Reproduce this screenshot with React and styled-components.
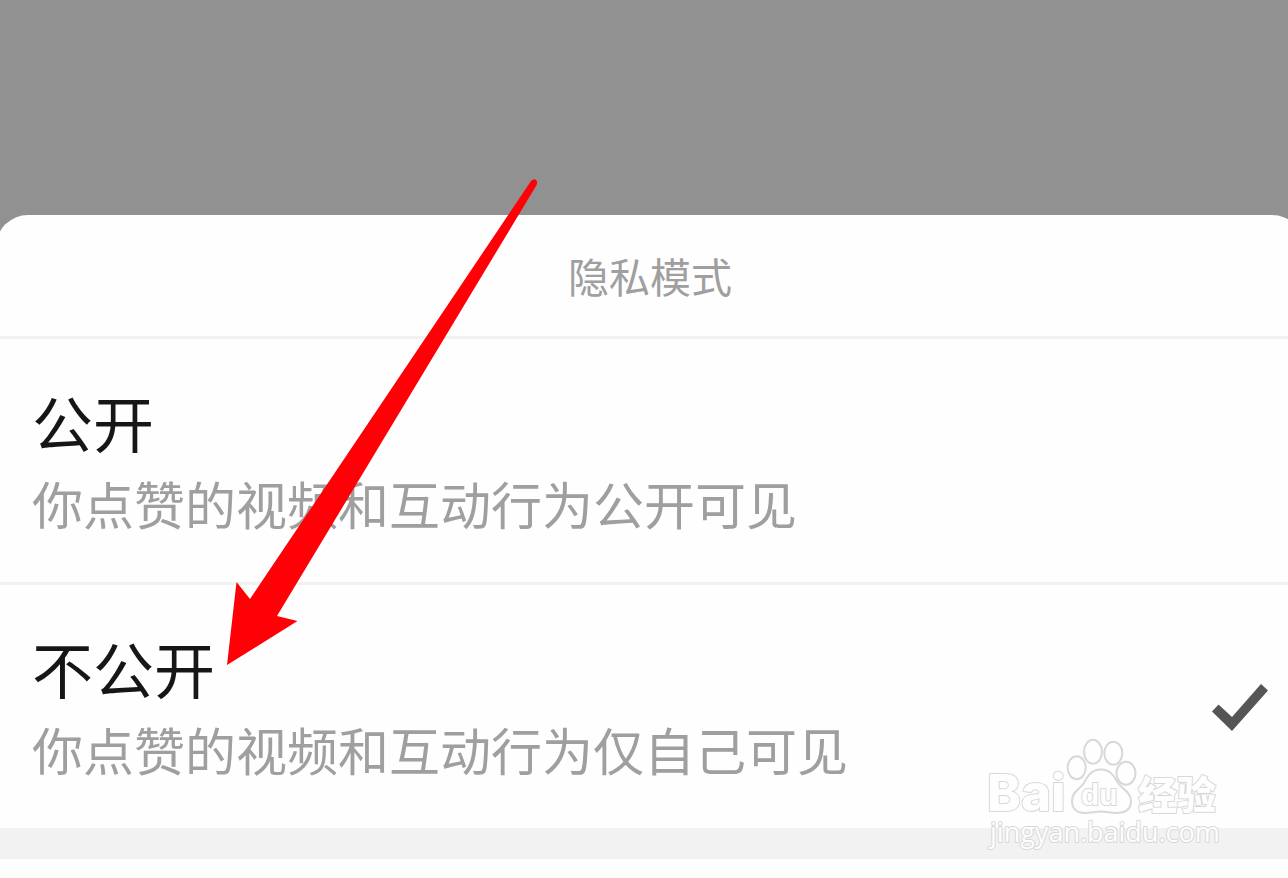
import React, { useState } from "react";
import styled, { createGlobalStyle } from "styled-components";

const GlobalStyle = createGlobalStyle`
  * { box-sizing: border-box; }
  body {
    margin: 0;
    background: #fefefe;
    font-family: "Noto Sans CJK SC", "Noto Sans", sans-serif;
  }
`;

const Page = styled.main`
  position: relative;
  min-height: 100vh;
  overflow: hidden;
  background: #fefefe;
`;

const Backdrop = styled.div`
  padding-top: 215px;
  background: #919191;
`;

const Sheet = styled.section`
  position: relative;
  margin: 0 -16px 0 -4px;
  border-radius: 32px 32px 0 0;
  background: #fefefe;
`;

const SheetTitle = styled.h1`
  margin: 0;
  padding: 30px 36px 31px;
  font-size: 41px;
  line-height: 60px;
  font-weight: 400;
  text-align: center;
  color: #9f9f9f;
`;

const Options = styled.div`
  border-bottom: 31px solid #f2f2f2;
`;

const Option = styled.label`
  display: flex;
  align-items: center;
  justify-content: space-between;
  padding: 41px 36px 40px;
  border-top: 3px solid #f1f1f1;
  cursor: pointer;
`;

const OptionText = styled.span`
  display: flex;
  flex-direction: column;
`;

const OptionName = styled.span`
  font-size: 61px;
  line-height: 84px;
  color: #161616;
`;

const OptionNote = styled.span`
  font-size: 51px;
  line-height: 78px;
  color: #9f9f9f;
`;

const Radio = styled.input`
  appearance: none;
  position: absolute;
  width: 1px;
  height: 1px;
  margin: 0;
  opacity: 0;
`;

const Check = styled.svg`
  flex: none;
  width: 56px;
  height: 47px;
  fill: #555;
  visibility: ${(p) => (p.$on ? "visible" : "hidden")};
`;

const Arrow = styled.svg`
  position: absolute;
  left: 220px;
  top: 176px;
  width: 324px;
  height: 494px;
  fill: #ff0006;
  pointer-events: none;
`;

const Watermark = styled.svg`
  position: absolute;
  right: 80px;
  bottom: 7px;
  width: 240px;
  height: 118px;
  fill: #fefefe;
  stroke: #d8d8d8;
  stroke-width: 2px;
  stroke-linejoin: round;
  pointer-events: none;

  text {
    paint-order: stroke;
  }
`;

const LatinMark = styled.text`
  font: 800 51px Inter, sans-serif;
`;

const PawMark = styled.text`
  font: 700 30px "Liberation Sans", sans-serif;
`;

const HanMark = styled.text`
  font: 900 39px "Noto Sans CJK SC", sans-serif;
`;

const SiteMark = styled.text`
  font: 400 27px "Open Sans", sans-serif;
`;

const modes = [
  { id: "public", name: "公开", note: "你点赞的视频和互动行为公开可见" },
  { id: "private", name: "不公开", note: "你点赞的视频和互动行为仅自己可见" },
];

export default function App() {
  const [mode, setMode] = useState("private");

  return (
    <Page>
      <GlobalStyle />
      <Backdrop>
        <Sheet>
          <SheetTitle id="privacy-title">隐私模式</SheetTitle>
          <Options role="radiogroup" aria-labelledby="privacy-title">
            {modes.map((m) => (
              <Option key={m.id} htmlFor={m.id}>
                <OptionText>
                  <OptionName>{m.name}</OptionName>
                  <OptionNote>{m.note}</OptionNote>
                </OptionText>
                <Radio
                  type="radio"
                  id={m.id}
                  name="privacy"
                  checked={mode === m.id}
                  onChange={() => setMode(m.id)}
                />
                <Check $on={mode === m.id} viewBox="0 0 56 47" aria-hidden="true">
                  <path d="M0 27.500 L6.500 20.500 L20 33 L49 0 L56 6.500 L20 47 Z" />
                </Check>
              </Option>
            ))}
          </Options>
          <Watermark viewBox="0 0 240 118">
            <LatinMark x="3" y="77">Bai</LatinMark>
            <g>
              <ellipse cx="92.7" cy="33.7" rx="9" ry="11.5" />
              <ellipse cx="109" cy="17.8" rx="9" ry="12" />
              <ellipse cx="129.3" cy="19.3" rx="9" ry="11.5" />
              <ellipse cx="142" cy="39.3" rx="9.5" ry="11.5" />
              <path d="M117 35.5 C126 35.5 130 42 134 49 C138 55 147 58 147 67 C147 76 140 79 132 79 C126 79 123 77.500 117 77.500 C111 77.500 107 79 101 79 C92 79 88 74 88 67 C88 58 96 55 100 49 C104 41 108 35.500 117 35.500 Z" />
            </g>
            <PawMark x="97" y="71">du</PawMark>
            <HanMark x="154" y="75">经验</HanMark>
            <SiteMark x="6" y="108">jingyan.baidu.com</SiteMark>
          </Watermark>
        </Sheet>
      </Backdrop>
      <Arrow viewBox="0 0 324 494" aria-hidden="true">
        <path d="M7 489 L16.500 406 L30 423 L311 5 Q314 2 316.500 4.500 Q318 7 316 10 L57 440 L77.500 445 Z" />
      </Arrow>
    </Page>
  );
}
